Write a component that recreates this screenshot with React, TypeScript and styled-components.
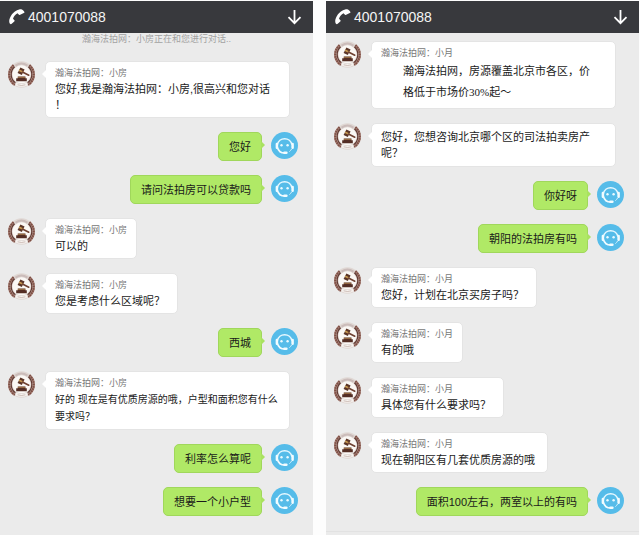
import React from "react";
import styled, { createGlobalStyle, css } from "styled-components";

const sans = `"Liberation Sans", "Noto Sans CJK SC", sans-serif`;
const serif = `"Liberation Serif", "Noto Sans CJK SC", serif`;

const GlobalStyle = createGlobalStyle`
  * { box-sizing: border-box; }
  body {
    margin: 0;
    background: #fdfdfd;
    font-family: ${sans};
    color: #1a1a1a;
  }
`;

const Page = styled.main`
  display: flex;
  gap: 13px;
  min-height: 100vh;
  padding: 1px 1px 0 0;
`;

const Panel = styled.section`
  flex: 1;
  min-width: 0;
  display: flex;
  flex-direction: column;
  background: #ebebeb;
`;

const Header = styled.header`
  display: flex;
  align-items: center;
  height: 32px;
  padding: 0 11px 0 8px;
  background: #38393d;
  color: #f4f4f4;
`;

const PhoneLink = styled.a`
  display: flex;
  align-items: center;
  gap: 3px;
  flex: 1;
  color: inherit;
  text-decoration: none;
  font-size: 14px;
  line-height: 18px;
`;

const CollapseButton = styled.button`
  display: flex;
  padding: 0;
  border: 0;
  background: none;
  color: inherit;
`;

const Notice = styled.p`
  margin: 0;
  padding-bottom: 14px;
  text-align: center;
  font-size: 9px;
  line-height: 12px;
  color: #a2a2a2;
`;

const Thread = styled.ol<{ $first?: boolean }>`
  list-style: none;
  display: flex;
  flex-direction: column;
  gap: 14px;
  margin: 0;
  padding: ${(p) => (p.$first ? "8px" : "2px")} 15px 15px 8px;
  border-bottom: 1px solid ${(p) => (p.$first ? "#e2e2e2" : "transparent")};
`;

const Row = styled.li<{ $mine?: boolean }>`
  display: flex;
  align-items: flex-start;
  flex-direction: ${(p) => (p.$mine ? "row-reverse" : "row")};
  gap: ${(p) => (p.$mine ? 9 : 10)}px;
`;

const bubble = css`
  position: relative;
  border: 1px solid;
  border-radius: 5px;
  font-size: 11px;
  line-height: 16px;

  &::after {
    content: "";
    position: absolute;
    top: 8px;
    border: 4px solid transparent;
  }
`;

const AgentBubble = styled.div<{ $fill?: boolean; $roomy?: boolean }>`
  ${bubble}
  flex: ${(p) => (p.$fill ? "1" : "0 1 auto")};
  margin-right: 8px;
  padding: ${(p) => (p.$roomy ? "5px 9px" : "4px 9px")};
  border-color: #e4e4e4;
  background: #fff;

  &::after {
    right: 100%;
    border-right-color: #fff;
    border-left-width: 0;
  }
`;

const UserBubble = styled.div`
  ${bubble}
  padding: 6px 10px 5px;
  border-color: #a0d75b;
  background: #b0e966;

  &::after {
    left: 100%;
    border-left-color: #a9e260;
    border-right-width: 0;
  }
`;

const Name = styled.div`
  font-size: 9px;
  line-height: 15px;
  color: #777;
`;

type Variant = "normal" | "small" | "quote";

const Text = styled.p<{ $variant: Variant }>`
  margin: 0;
  padding-right: 3px;
  white-space: nowrap;
  ${(p) =>
    p.$variant === "small" &&
    css`
      padding-right: 0;
      font-size: 10px;
      line-height: 17px;
    `}
  ${(p) =>
    p.$variant === "quote" &&
    css`
      padding: 0 0 1px 22px;
      font-family: ${serif};
      line-height: 21px;
    `}
`;

const Icon = styled.svg`
  display: block;
  flex: none;
`;

function PhoneIcon() {
  return (
    <Icon width="17" height="18" viewBox="0 0 17 18" aria-hidden="true">
      <path
        fill="#fff"
        d="M11.2 1.4 C7 2.2 2.8 6.4 1.4 11.4 C1 12.9 1.2 14.6 2 15.8 C2.5 16.5 3.2 16.4 3.7 15.8 L6.3 13.4 C6.8 12.9 6.7 12.3 6.2 11.9 L5 10.8 C5.8 8.4 7.4 6.4 9.5 5.3 L10.7 6.5 C11.1 7 11.6 7 12.2 6.7 L15.8 5.1 C16.5 4.8 16.6 4 16.1 3.4 C14.9 1.7 13.2 1.1 11.2 1.4 Z"
      />
    </Icon>
  );
}

function DownIcon() {
  return (
    <Icon width="15" height="16" viewBox="0 0 15 16" aria-hidden="true">
      <path d="M7.5 1V14M1.5 8.2l6 6 6-6" fill="none" stroke="#fff" strokeWidth="1.8" />
    </Icon>
  );
}

function AgentAvatar() {
  return (
    <Icon width="27" height="27" viewBox="0 0 27 27" role="img" aria-label="客服">
      <circle cx="13.5" cy="13.5" r="13.2" fill="#e0d8d4" />
      <path
        d="M5.6 4.2 A12.2 12.2 0 0 0 6.8 23.8 M21.4 4.2 A12.2 12.2 0 0 1 20.2 23.8"
        fill="none"
        stroke="#a98379"
        strokeWidth="2.4"
      />
      <path
        d="M5.6 4.2 A12.2 12.2 0 0 0 6.8 23.8 M21.4 4.2 A12.2 12.2 0 0 1 20.2 23.8"
        fill="none"
        stroke="#7d4e44"
        strokeWidth="2"
        strokeDasharray="1.6 .8"
      />
      <path
        d="M6.6 5.8 A10.3 10.3 0 0 0 7.4 21.8 M20.4 5.8 A10.3 10.3 0 0 1 19.6 21.8"
        fill="none"
        stroke="#633a32"
        strokeWidth="1.3"
      />
      <circle cx="13.5" cy="13.3" r="9" fill="#fbf8f5" />
      <path d="M7.5 4.6 Q13.5 .6 19.5 4.6" fill="none" stroke="#cbbcba" strokeWidth="2" />
      <path d="M12.4 6.6 L16.6 8.6 L13.8 14 L9.6 12 Z" fill="#5b3527" />
      <path d="M11.1 9.2 L15.4 11.2" stroke="#c99b52" strokeWidth="1.5" />
      <path d="M14.4 11 L20.8 14.2" stroke="#6e4030" strokeWidth="1.6" strokeLinecap="round" />
      <path d="M9.8 15.4 H17.4 V17.2 H18.8 V20.2 H8.2 V17.2 H9.8 Z" fill="#542e25" />
      <path d="M9.8 16.3 H17.4" stroke="#b98a53" strokeWidth=".8" />
      <path d="M7.8 23 Q13.5 25.8 19.2 23" fill="none" stroke="#f6f2ef" strokeWidth="2.6" />
      <path d="M9.6 23.8 Q13.5 25.2 17.4 23.8" fill="none" stroke="#bba7a1" strokeWidth=".7" />
    </Icon>
  );
}

function UserAvatar() {
  return (
    <Icon width="27" height="27" viewBox="0 0 27 27" role="img" aria-label="我">
      <circle cx="13.5" cy="13.5" r="13.5" fill="#56bce9" />
      <path
        d="M6.4 12.6 A7.4 7.4 0 0 1 20.9 12.6"
        fill="none"
        stroke="#e6f8ff"
        strokeWidth="1.5"
      />
      <path
        d="M6.4 15.4 C7.4 18.8 10 21 13.6 21"
        fill="none"
        stroke="#f2fcff"
        strokeWidth="1.7"
      />
      <path d="M5.9 12V15.8M21.6 12V15.8" stroke="#f2fcff" strokeWidth="2.5" strokeLinecap="round" />
      <path d="M13.4 20.7H15.4" stroke="#f2fcff" strokeWidth="2.5" strokeLinecap="round" />
      <path d="M20.6 17 Q19.8 18.6 18.4 19.6" fill="none" stroke="#d5f1fd" strokeWidth="1" />
      <circle cx="10.5" cy="13.2" r="1.2" fill="#eafaff" />
      <circle cx="16.6" cy="13.2" r="1.2" fill="#eafaff" />
    </Icon>
  );
}

interface Message {
  lines: string[];
  mine?: boolean;
  anonymous?: boolean;
  variant?: Variant;
}

interface ChatProps {
  agent: string;
  notice?: string;
  messages: Message[];
}

function Chat({ agent, notice, messages }: ChatProps) {
  return (
    <Panel>
      <Header>
        <PhoneLink href="tel:4001070088">
          <PhoneIcon />
          4001070088
        </PhoneLink>
        <CollapseButton type="button" aria-label="收起">
          <DownIcon />
        </CollapseButton>
      </Header>
      {notice && <Notice>{notice}</Notice>}
      <Thread $first={!notice}>
        {messages.map(({ lines, mine, anonymous, variant = "normal" }) => (
          <Row key={lines[0]} $mine={mine}>
            {mine ? (
              <>
                <UserAvatar />
                <UserBubble>{lines[0]}</UserBubble>
              </>
            ) : (
              <>
                <AgentAvatar />
                <AgentBubble $fill={lines.length > 1} $roomy={anonymous}>
                  {!anonymous && <Name>{agent}</Name>}
                  <Text $variant={variant}>
                    {lines.map((line, i) => (
                      <React.Fragment key={line}>
                        {i > 0 && <br />}
                        {line}
                      </React.Fragment>
                    ))}
                  </Text>
                </AgentBubble>
              </>
            )}
          </Row>
        ))}
      </Thread>
    </Panel>
  );
}

const leftMessages: Message[] = [
  { lines: ["您好,我是瀚海法拍网：小房,很高兴和您对话", "！"] },
  { lines: ["您好"], mine: true },
  { lines: ["请问法拍房可以贷款吗"], mine: true },
  { lines: ["可以的"] },
  { lines: ["您是考虑什么区域呢？"] },
  { lines: ["西城"], mine: true },
  { lines: ["好的 现在是有优质房源的哦，户型和面积您有什么", "要求吗？"], variant: "small" },
  { lines: ["利率怎么算呢"], mine: true },
  { lines: ["想要一个小户型"], mine: true },
];

const rightMessages: Message[] = [
  { lines: ["瀚海法拍网，房源覆盖北京市各区，价", "格低于市场价30%起～"], variant: "quote" },
  { lines: ["您好，您想咨询北京哪个区的司法拍卖房产", "呢？"], anonymous: true },
  { lines: ["你好呀"], mine: true },
  { lines: ["朝阳的法拍房有吗"], mine: true },
  { lines: ["您好，计划在北京买房子吗？"] },
  { lines: ["有的哦"] },
  { lines: ["具体您有什么要求吗？"] },
  { lines: ["现在朝阳区有几套优质房源的哦"] },
  { lines: ["面积100左右，两室以上的有吗"], mine: true },
];

export default function App() {
  return (
    <>
      <GlobalStyle />
      <Page>
        <Chat
          agent="瀚海法拍网：小房"
          notice="瀚海法拍网：小房正在和您进行对话.."
          messages={leftMessages}
        />
        <Chat agent="瀚海法拍网：小月" messages={rightMessages} />
      </Page>
    </>
  );
}
